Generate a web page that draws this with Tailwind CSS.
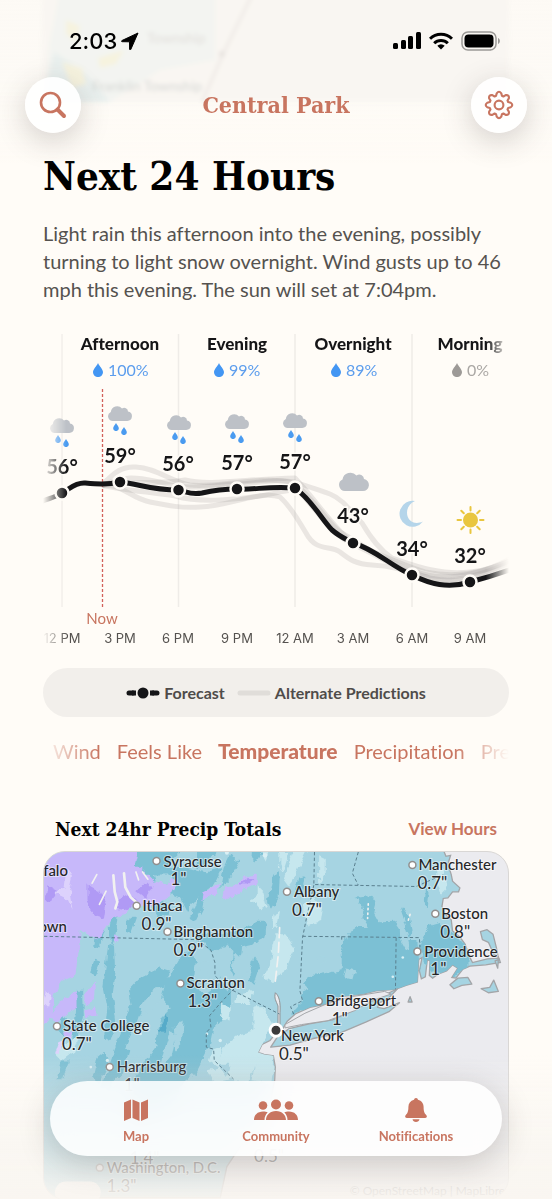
<!DOCTYPE html>
<html lang="en">
<head>
  <meta charset="UTF-8">
  <meta name="viewport" content="width=device-width, initial-scale=1">
  <title>Central Park - Next 24 Hours</title>
  <script src="https://cdn.jsdelivr.net/npm/@tailwindcss/browser@4"></script>
</head>
<body class="bg-[#fffcf7] font-['Lato',sans-serif] text-[#151517] overflow-x-hidden [font-variant-ligatures:none]">

  <!-- shared icons -->
  <svg class="hidden" aria-hidden="true">
    <symbol id="cloud" viewBox="0 0 30 20">
      <path d="M6 20a6 6 0 0 1-2.500-11.400A8 8 0 0 1 17.500 4.500a4.600 4.600 0 0 1 7.500 3.600A6 6 0 0 1 24 20z" fill="#bdc1c7"/>
    </symbol>
    <symbol id="drop" viewBox="0 0 10 14">
      <path d="M5 0C6.200 3 10 6 10 9.300A4.900 4.700 0 0 1 0 9.300C0 6 3.800 3 5 0z" fill="currentColor"/>
    </symbol>
    <symbol id="rain" viewBox="0 0 24 30">
      <use href="#cloud" width="24" height="16"/>
      <g color="#4a9bf0">
        <use href="#drop" x="5" y="18" width="6" height="8"/>
        <use href="#drop" x="13" y="22" width="6" height="8"/>
      </g>
    </symbol>
  </svg>

  <header class="fixed inset-x-0 top-0 z-20 bg-linear-to-b from-[#fdfaf5] via-[#fdfaf5]/90 to-transparent">
    <!-- map scrolled under the header -->
    <svg class="absolute inset-x-0 top-0 -z-10 w-full" viewBox="0 0 552 112" aria-hidden="true">
      <defs>
        <filter id="soft" x="-10%" y="-10%" width="120%" height="120%"><feGaussianBlur stdDeviation="2"/></filter>
      </defs>
      <g filter="url(#soft)">
        <rect x="42" y="-10" width="467" height="112" fill="#f9f6f2"/>
        <path d="M60-10H215V60l-55 10-50 32H44l6-60z" fill="#f3f4f1"/>
        <path d="M44 102l10-50 30 20 26 30z" fill="#e9f0ee"/>
        <path d="M66 20l14 6-4 16-10-8zM62 62l20 6 4 16-14 4zM98 58l26-8-8 14-16 4z" fill="#f6f3df"/>
        <path d="M252-5L224 52l-22 50" fill="none" stroke="#eae6e1" stroke-width="2"/>
        <circle cx="222" cy="54" r="3" fill="#e6e2de"/>
        <text x="147" y="43" font-size="14" fill="#dfdcd8">Township</text>
        <text x="92" y="91" font-size="14" fill="#d3d5d2">Franklin Township</text>
      </g>
    </svg>

    <div class="flex items-center justify-between pt-[29px] pl-[69px] pr-[51px]">
      <div class="flex items-center gap-1 font-['Inter',sans-serif] text-[22px] leading-6 font-medium text-black">
        <time>2:03</time>
        <svg class="size-[18px]" viewBox="0 0 18 18" aria-hidden="true"><path d="M17 1 1 8.500c-.7.400-.5 1.200.2 1.200l7.300.1.100 7.400c0 .8.900.9 1.200.2z" fill="#000" stroke="#000" stroke-width="1" stroke-linejoin="round"/></svg>
      </div>
      <div class="flex items-center gap-2">
        <svg class="h-[18px] w-7" viewBox="0 0 28 18" aria-hidden="true">
          <rect x="0" y="11" width="5" height="6" rx="1.500"/><rect x="8" y="8" width="5" height="9" rx="1.500"/>
          <rect x="15" y="4" width="5" height="13" rx="1.500"/><rect x="23" y="0" width="5" height="17" rx="1.500"/>
        </svg>
        <svg class="h-[18px] w-6" viewBox="0 0 24 18" aria-hidden="true">
          <g fill="none" stroke="#000" stroke-width="3"><path d="M1 6.800a15.500 15.500 0 0 1 22 0"/><path d="M5.200 11.200a9.600 9.600 0 0 1 13.600 0"/></g>
          <path d="M12 17.500 8.300 13.800a5.200 5.200 0 0 1 7.400 0z"/>
        </svg>
        <svg class="h-5 w-10" viewBox="0 0 40 20" aria-hidden="true">
          <rect x="1" y="1" width="34" height="18" rx="6" fill="none" stroke="#9b9996" stroke-width="1.500"/>
          <rect x="3.500" y="3.500" width="29" height="13" rx="4"/>
          <path d="M37 7v6c2.500-1 2.500-5 0-6z" fill="#9b9996"/>
        </svg>
      </div>
    </div>

    <div class="flex items-center justify-between px-[25px] pt-6 pb-8">
      <button type="button" aria-label="Search" class="flex size-14 items-center justify-center rounded-full bg-white/90 shadow-[0_8px_30px_rgba(60,50,50,0.22)]">
        <svg class="size-[30px]" viewBox="0 0 30 30" fill="none" stroke="#c87560" stroke-linecap="round" aria-hidden="true">
          <circle cx="12.500" cy="12.500" r="9.500" stroke-width="2.600"/><path d="M19.500 19.500 26 26" stroke-width="4"/>
        </svg>
      </button>
      <h2 class="font-['DejaVu_Serif_Condensed','DejaVu_Serif',serif] text-[23px] font-bold text-[#c87560]">Central Park</h2>
      <button type="button" aria-label="Settings" class="flex size-14 items-center justify-center rounded-full bg-white/90 shadow-[0_8px_30px_rgba(60,50,50,0.22)]">
        <svg class="size-8" viewBox="0 0 24 24" fill="none" stroke="#c87560" stroke-width="1.600" stroke-linejoin="round" aria-hidden="true">
          <circle cx="12" cy="12" r="3.300"/>
          <path d="M10.300 3.200Q12 .9 13.700 3.200L14.200 5.100 15.300 5.600 17 4.600Q19.800 4.200 19.400 7L18.400 8.700 18.900 9.800 20.800 10.300Q23.100 12 20.800 13.700L18.900 14.200 18.400 15.300 19.400 17Q19.800 19.800 17 19.400L15.300 18.400 14.200 18.900 13.700 20.800Q12 23.100 10.300 20.800L9.800 18.900 8.700 18.400 7 19.400Q4.200 19.800 4.600 17L5.600 15.300 5.100 14.200 3.200 13.700Q.9 12 3.200 10.300L5.100 9.800 5.600 8.700 4.600 7Q4.200 4.200 7 4.600L8.700 5.600 9.800 5.100z"/>
        </svg>
      </button>
    </div>
  </header>

  <main class="px-[43px] pt-[151px]">
    <h1 class="font-['DejaVu_Serif_Condensed','DejaVu_Serif',serif] text-[40px] leading-[50px] font-bold text-black">Next 24 Hours</h1>
    <p class="mt-[18px] text-xl leading-7 text-[#55524f]">Light rain this afternoon into the evening, possibly turning to light snow overnight. Wind gusts up to 46 mph this evening. The sun will set at 7:04pm.</p>

    <!-- hourly temperature chart -->
    <svg class="mt-[29px] block w-full mask-x-from-95%" viewBox="43 332 466 320" role="img" aria-label="Hourly temperature forecast">
      <g stroke="#efece8" stroke-width="1.500">
        <path d="M62 334V607M178.500 334V607M295 334V607M412 334V607"/>
      </g>

      <g font-size="17" font-weight="900" text-anchor="middle" fill="#151517">
        <text x="120" y="350">Afternoon</text>
        <text x="237" y="350">Evening</text>
        <text x="353" y="350">Overnight</text>
        <text x="470" y="350">Morning</text>
      </g>
      <g font-size="16" fill="#5c9ded" color="#4396f3">
        <use href="#drop" x="93" y="363" width="10" height="14"/><text x="108" y="376">100%</text>
        <use href="#drop" x="214" y="363" width="10" height="14"/><text x="229" y="376">99%</text>
        <use href="#drop" x="331" y="363" width="10" height="14"/><text x="346" y="376">89%</text>
      </g>
      <g font-size="16" fill="#aaa7a4" color="#9d9a97">
        <use href="#drop" x="452" y="363" width="10" height="14"/><text x="467" y="376">0%</text>
      </g>

      <!-- alternate predictions -->
      <g fill="none" stroke="#8a8683" stroke-opacity=".18" stroke-width="5" stroke-linejoin="round">
        <path d="M102 485C115 472 122 466 136 467C156 468 170 481 190 485C220 488 250 476 295 482C310 487 318 490 330 494C345 500 352 514 362 523C372 540 380 550 392 558C410 564 440 576 470 572C490 570 500 564 512 558"/>
        <path d="M102 486C120 482 130 498 150 502C170 506 180 508 200 507C230 506 260 490 280 497C292 508 298 520 306 533C316 552 330 545 340 552C350 560 356 564 372 565C395 566 410 572 430 578C460 584 480 578 512 564"/>
        <path d="M102 486C125 474 140 478 160 482C190 492 215 484 240 484C265 482 280 478 295 484C315 500 325 520 340 532C365 546 385 562 412 570C440 582 470 578 512 560"/>
        <path d="M102 485C120 490 150 492 175 496C200 503 230 500 260 496C280 493 290 488 300 492C318 512 330 532 350 543C380 556 400 572 430 578C460 584 480 574 512 562"/>
        <path d="M102 485C130 480 160 485 185 480C210 486 245 479 295 478C320 505 335 530 352 542C380 555 400 564 425 572C455 578 480 574 512 560"/>
      </g>

      <path d="M102.500 389V607" stroke="#d2605a" stroke-width="1.300" stroke-dasharray="3 2"/>

      <path d="M40 502C50 498 56 497 62 493C70 489 74 483 84 483C96 484 106 485 120 482C140 484 150 490 178.500 490C188 492 190 495 202 493C215 490 222 489 237 489C255 490 268 486 295 488C312 500 322 520 332 530C340 537 346 539 353 543C375 549 392 567 412 575C430 584 448 589 470 582C485 578 498 574 512 569" fill="none" stroke="#151517" stroke-width="5"/>
      <g fill="#151517" stroke="#fffcf7" stroke-width="2.500">
        <circle cx="62" cy="493" r="6.500"/><circle cx="120" cy="482" r="6.500"/><circle cx="178.500" cy="490" r="6.500"/>
        <circle cx="237" cy="489" r="6.500"/><circle cx="295" cy="488" r="6.500"/><circle cx="353" cy="543" r="6.500"/>
        <circle cx="412" cy="575" r="6.500"/><circle cx="470" cy="582" r="6.500"/>
      </g>

      <use href="#rain" x="50" y="417" width="24" height="30"/>
      <use href="#rain" x="108" y="405" width="24" height="30"/>
      <use href="#rain" x="167" y="414" width="24" height="30"/>
      <use href="#rain" x="225" y="413" width="24" height="30"/>
      <use href="#rain" x="283" y="412" width="24" height="30"/>
      <use href="#cloud" x="339" y="471" width="30" height="20"/>
      <path d="M415 501a13 13 0 1 0 8 20.500c-9 4-16-1-16-9 0-5 3-9.500 8-11.500z" fill="#b5d5ea"/>
      <circle cx="470.500" cy="520" r="7.500" fill="#e9c63f"/>
      <path d="M470.500 507v3.500M470.500 529.500v3.500M457.500 520h3.500M480 520h3.500M461.300 510.800l2.500 2.500M477.200 526.700l2.500 2.500M461.300 529.200l2.500-2.500M477.200 513.300l2.500-2.500" stroke="#e9c63f" stroke-width="2" stroke-linecap="round"/>

      <g font-size="20" font-weight="700" text-anchor="middle" fill="#151517" stroke="#fffcf7" stroke-width="3" paint-order="stroke">
        <text x="62" y="474">56°</text>
        <text x="120" y="463">59°</text>
        <text x="178" y="471">56°</text>
        <text x="237" y="470">57°</text>
        <text x="295" y="469">57°</text>
        <text x="353" y="523">43°</text>
        <text x="412" y="556">34°</text>
        <text x="470" y="563">32°</text>
      </g>

      <text x="102" y="624" font-size="15" text-anchor="middle" fill="#c87560">Now</text>
      <g class="font-['Inter',sans-serif]" font-size="13" text-anchor="middle" fill="#55524f">
        <text x="62" y="643">12 PM</text>
        <text x="120" y="643">3 PM</text>
        <text x="178" y="643">6 PM</text>
        <text x="237" y="643">9 PM</text>
        <text x="295" y="643">12 AM</text>
        <text x="353" y="643">3 AM</text>
        <text x="412" y="643">6 AM</text>
        <text x="470" y="643">9 AM</text>
      </g>
    </svg>

    <div class="mt-4 flex h-[49px] items-center justify-center gap-3 rounded-full bg-[#f2efeb] text-base font-bold text-[#4f4c4a]">
      <span class="flex items-center gap-1">
        <svg class="h-3 w-[34px]" viewBox="0 0 34 12" aria-hidden="true">
          <path d="M3 6h4M27 6h4" stroke="#151517" stroke-width="5" stroke-linecap="round"/><path d="M6 6h4M24 6h4" stroke="#151517" stroke-width="5"/><circle cx="17" cy="6" r="5.500" fill="#151517"/>
        </svg>
        Forecast
      </span>
      <span class="flex items-center gap-1">
        <svg class="h-3 w-[34px]" viewBox="0 0 34 12" aria-hidden="true"><path d="M3 6h28" stroke="#e0ddd9" stroke-width="5" stroke-linecap="round"/></svg>
        Alternate Predictions
      </span>
    </div>

    <div class="mt-[18px] flex gap-4 overflow-hidden pl-[10px] text-xl leading-8 whitespace-nowrap text-[#c87560] mask-x-from-88%">
      <button type="button">Wind</button>
      <button type="button">Feels Like</button>
      <button type="button" class="text-[21px] font-black">Temperature</button>
      <button type="button">Precipitation</button>
      <button type="button">Pressure</button>
    </div>

    <div class="mt-12 flex items-center justify-between px-3">
      <h3 class="font-['DejaVu_Serif_Condensed','DejaVu_Serif',serif] text-[19px] leading-7 font-bold text-black">Next 24hr Precip Totals</h3>
      <a href="#" class="text-[17px] leading-7 font-bold text-[#c87560]">View Hours</a>
    </div>

    <!-- precipitation map -->
    <div class="mt-2 overflow-hidden rounded-[22px] border border-[#d9d7d5] bg-[#ebebef]">
      <svg class="block w-full" viewBox="3 4 466 348" role="img" aria-label="Precipitation totals map">
        <defs>
          <path id="land" d="M0 0H1210L1220 25 1234 22 1226 48 1236 80 1240 100 1262 120 1258 132 1240 132 1226 150 1212 152 1208 176 1218 200 1236 216 1240 250 1262 268 1278 290 1290 325 1300 345 1345 334 1380 332 1384 345 1340 352 1292 356 1270 366 1250 392 1238 390 1256 362 1240 352 1222 370 1196 380 1180 392 1170 384 1172 340 1164 336 1158 388 1146 394 1140 370 1148 330 1138 336 1134 404 1100 414 1068 426 1010 430 970 440 900 448 860 470 810 480 766 500 742 522 728 545 706 560 690 580 666 592 654 616 672 622 700 626 706 660 704 700 690 770 640 860 600 900 560 960 540 1053H0z"/>
          <clipPath id="landClip"><use href="#land"/></clipPath>
          <!-- roughens the edges of the rain bands -->
          <filter id="rough" filterUnits="userSpaceOnUse" x="-40" y="-40" width="1480" height="1120">
            <feTurbulence type="fractalNoise" baseFrequency=".05 .035" numOctaves="3" seed="4"/>
            <feDisplacementMap in="SourceGraphic" scale="20" xChannelSelector="R" yChannelSelector="G"/>
          </filter>
        </defs>
        <g transform="scale(.33333)">
          <use href="#land" fill="#a6d4e2" stroke="#a3a5a8" stroke-width="4"/>
          <g clip-path="url(#landClip)">
            <g filter="url(#rough)">
              <!-- mid blue bands -->
              <g fill="#7cc0d4">
                <path d="M275 -10H440L400 30 380 60 440 60 500 70 545 60 520 110 470 150 440 190 420 150 370 130 330 130 310 90 270 70z"/>
                <path d="M470 -10L530 10 500 50 470 60zM570 20L600 40 570 90 540 120 550 60zM640 -10l30 20-24 40-10-10zM480 130l20-10-14 60-20 40-16-10z"/>
                <path d="M470 260l90-4 50-10 40-24 30 0-4 48-40 20-30 6-6 60-30 50-14-10 10-50-34-40-30 0-6-20-30-6z"/>
                <path d="M218 20l34 0-14 50 6 80-16 90-14 60-10-60 10-80z"/>
                <path d="M174 220l18 0 0 30-16 50-16-6zM202 290l18 10 4 80-8 60 10 80-20 60-16-10 10-90-12-60zM256 220l18-14 12 6-16 46-14-6zM160 340l16 6-14 34-14-8z"/>
                <path d="M420 330l30-24 16 40-6 60 30 40 40-30 16-40 26 50 0 50-20 30-34 40-10 50-40 80-40 30-40 80-60 30-50 40-20-40 30-60-20-30 30-60 50-70 10-80 30-30-40-50 0-50 40 0z"/>
                <path d="M300 390l60-30 30 10-20 30-60 60-20 60-40 90-24 80-26 40-20-10 40-110 30-80 20-60-8-40z"/>
                <path d="M108 430l16 0 2 80-18 80-14-10zM60 500l18 10-6 60-20-20zM350 150l30 20 10 30-30 10-20-30z"/>
                <path d="M170 630l24-20 8 40-26 60-20-20zM240 600l26 10-20 70-30 30zM60 640l24 0-20 60-20 0z"/>
                <path d="M948 150l50-6 14 20-8 30 16 30 44-2 16 24 22-6-20-60 10 0 20 30 8 40-14 30 28 0 14 170-80 10-60 6-70 10-30-40-20 40-50 20-20-10-28 22-10-40 30-40-24-24 40-22 80-14 0-60 16-50 30-20 36 0-20-30 6-20z"/>
                <path d="M1168 235l34-10 50 40 36 40 0 60-80 30-50-40-20-60zM770 480l30-30 40 0-30 30-50 20zM786 432l22-10 10 30-30 26zM700 80l20-10-4 80-22 40-10-30z"/>
                <path d="M1160 120l12 20-4 40-12-10zM794 85l-8 50-18 0 10-46zM640 330l20 20-20 60-14-14z"/>
              </g>
              <g fill="#a6d4e2">
                <path d="M530 310l30-20 20 20-10 60 16 30-26 30-20-40zM580 320l40 0 2 50-24 30-20-30zM480 350l20-10 10 60-20 20-20-20z"/>
                <path d="M1080 210l20 30 12 50-8 20-22-40zM920 360l26 8-8 28-24-6zM830 330l20-6 10 14-16 10z"/>
                <path d="M342 420l30-6-10 40-40 46-24-20zM370 610l20-60 16 20-10 50-40 50z"/>
                <path d="M340 80l60 0-10 26-40 14zM400 540l30-20-6 70-20 20z"/>
              </g>
              <path d="M376 500l10 20-14 40-18-6z" fill="#57abc9"/>
              <g fill="#c6e7ee">
                <path d="M650 110l16 16 14 50-20 10-26-30 16-10z"/>
                <path d="M706 260l30 0 28 40-28 70-16 10-22 30-28-20 20-40 6-50zM790 170l30-20 30 30-6 40-40 14-14-30z"/>
                <path d="M640 480l30 0 30 50-30 50-20 70-30 60-60-20 10-40-40 0 30-60 40-30 40-10z"/>
                <path d="M590 440l50-10-10 40-50 0zM546 470l26 10-4 40-26-10zM660 600l44 30-10 80-60-10zM516 610l30-10-10 60-30-20zM500 670l40-10 30 40-50 10z"/>
                <path d="M762 10l44-6-40 80-22 30-14-20zM838 20l20 10 0 50-20 30zM1190 60l20 0 16 60-20 20-14-40zM718 12l30 0-20 60-10-20zM660 14l30-14-14 40zM700 200l20-10-8 50-16 0z"/>
                <path d="M40 620l50-40 30-20-20 50-40 30z"/>
              </g>
              <!-- purple snow area -->
              <g fill="#c7b8fa">
                <path d="M-20 -20H300L280 60 256 80 250 130 276 170 256 200 214 212 190 250 172 276 120 250 112 320 104 380 60 400 40 450 30 510 -20 560z"/>
                <path d="M250 60l40-10 50 50 40 10 10-20 20 14-20 40-50 30-60 6-40-20zM130 440l36-36-4 50-30 20zM60 460l50-30 0 50-60 40-30-6zM490 130l50-24-10 30-44 24zM220 260l20 10-16 20z"/>
                <path d="M556 116l30-4 30-26 34-6 0 26-40 20-36 24-26 0zM130 490l34-10 0 24-30 6zM70 560l30-10-20 30z"/>
              </g>
              <g fill="#b09af5">
                <path d="M140 110l36 20 20 40-6 40-34-10-16-40zM226 160l40-20 20 20-24 30-30-6zM290 130l30-30 16 20-20 30zM20 110l30 16-16 36-20-6zM594 110l26-20 20 4-20 16z"/>
              </g>
              <g fill="#ddd2fc">
                <path d="M80 60l16 26-8 40 10 60-14-30-40-20 24-14 4-30zM14 430l20 10-10 40-20 0zM50 590l20-10-16 40-14 0z"/>
              </g>
            </g>
            <!-- lakes -->
            <g fill="none" stroke="#f1f1f0" stroke-linecap="round">
              <path d="M218 82l4 50 8 30-6 20M250 76l4 42 16 30 22 20" stroke-width="8"/>
              <path d="M168 80l-14 26M196 130l-20 40M286 72l8 24M306 72l16 22" stroke-width="5"/>
              <path d="M719 240l-4 80-10 90" stroke-width="5" stroke-dasharray="30 14"/>
              <path d="M986 168l-2 44M1112 200l-6 20" stroke-width="5" stroke-dasharray="4 10"/>
            </g>
            <g fill="#d9eff4">
              <circle cx="560" cy="14" r="6"/><circle cx="675" cy="22" r="7"/><circle cx="1090" cy="330" r="4"/><circle cx="1060" cy="388" r="4"/>
              <circle cx="540" cy="580" r="5"/><circle cx="500" cy="560" r="4"/><circle cx="200" cy="640" r="5"/><circle cx="150" cy="660" r="4"/><circle cx="300" cy="560" r="4"/>
            </g>
          </g>

          <!-- islands and cape -->
          <g fill="#a6d4e2" stroke="#a3a5a8" stroke-width="4" stroke-linejoin="round">
            <path d="M692 600l20-30 36-26 60-14 70-12 40-18 50-24 60-30 46-22-30 32-24 10-6 14 20 4 46-18-30 26-70 32-80 34-80 16-70 20z"/>
            <path d="M1324 252l20-6 18 14 10 40 6 30-14-10-16-36-18-8zM1368 340l10-4-2 26zM1232 412l24-20 30-2 12 20-30 4-24 10zM1326 424l26-4 12-22 14 34-30 4zM1106 464l6-16 6 16z"/>
          </g>
          <path d="M735 532l60-34 60-26 80-24 100-16 20 8-60 20-50 30-80 30-80 12-50 10z" fill="#ebebef" stroke="#a3a5a8" stroke-width="3"/>
          <path d="M706 436c12 10 16 30 14 60v40l-6 0v-60c-6-16-12-22-8-40z" fill="#ebebef" stroke="#8f9193" stroke-width="3"/>

          <!-- state lines -->
          <g fill="none" stroke="#5a7f8e" stroke-width="3" stroke-dasharray="10 7">
            <path d="M9 266L290 272 470 276 512 308 524 345 524 385 560 420 718 500"/>
            <path d="M582 424L545 462 508 505 512 540 498 556 498 600 520 606 522 640 580 696"/>
            <path d="M824 12L822 110 1130 116 1212 80M956 12L938 76 956 112"/>
            <path d="M822 112L800 210 788 270 780 430 788 460 752 478 762 502M788 266L1140 270 1142 300M1070 270L1068 426M906 266v16"/>
          </g>
        </g>

        <!-- city markers -->
        <g fill="#fff" stroke="#918f8e" stroke-width="1.500">
          <circle cx="116" cy="13" r="3.500"/><circle cx="96" cy="58" r="3.500"/><circle cx="127" cy="84" r="3.500"/><circle cx="140" cy="136" r="3.500"/>
          <circle cx="247" cy="44" r="3.500"/><circle cx="373" cy="17" r="3.500"/><circle cx="396" cy="66" r="3.500"/><circle cx="378" cy="104" r="3.500"/>
          <circle cx="279" cy="154" r="3.500"/><circle cx="16" cy="179" r="3.500"/><circle cx="69" cy="220" r="3.500"/><circle cx="59" cy="321" r="3.500"/>
        </g>
        <circle cx="236" cy="183" r="6" fill="#3b3a3b" stroke="#fff" stroke-width="3"/>

        <g font-size="15" fill="#262628" stroke="#fff" stroke-opacity=".5" stroke-width="2" paint-order="stroke" font-weight="500">
          <text x="123" y="19">Syracuse</text>
          <text x="102" y="63">Ithaca</text>
          <text x="133" y="89">Binghamton</text>
          <text x="146" y="141">Scranton</text>
          <text x="254" y="49">Albany</text>
          <text x="379" y="22">Manchester</text>
          <text x="402" y="71">Boston</text>
          <text x="385" y="109">Providence</text>
          <text x="286" y="159">Bridgeport</text>
          <text x="241" y="194">New York</text>
          <text x="22" y="184">State College</text>
          <text x="76" y="225">Harrisburg</text>
          <text x="66" y="326">Washington, D.C.</text>
          <text x="27" y="28" text-anchor="end">Buffalo</text>
          <text x="26" y="84" text-anchor="end">Jamestown</text>
        </g>
        <g font-size="17" fill="#262628" stroke="#fff" stroke-opacity=".5" stroke-width="2" paint-order="stroke">
          <text x="130" y="37">1"</text>
          <text x="101" y="82">0.9"</text>
          <text x="133" y="108">0.9"</text>
          <text x="147" y="160">1.3"</text>
          <text x="252" y="68">0.7"</text>
          <text x="378" y="41">0.7"</text>
          <text x="401" y="90">0.8"</text>
          <text x="391" y="128">1"</text>
          <text x="292" y="178">1"</text>
          <text x="239" y="213">0.5"</text>
          <text x="21" y="203">0.7"</text>
          <text x="83" y="244">1"</text>
          <text x="89" y="317">1.4"</text>
          <text x="214" y="315">0.5"</text>
          <text x="66" y="345">1.3"</text>
        </g>
        <rect x="14" y="335" width="46" height="22" rx="11" fill="#fff"/>
        <text x="310" y="348" font-size="12" fill="#77757a">© OpenStreetMap | MapLibre</text>
      </svg>
    </div>
  </main>

  <!-- fade behind the tab bar -->
  <div class="pointer-events-none fixed inset-x-0 bottom-0 z-10 h-36 bg-linear-to-b from-[#f7f4ef]/0 via-[#f7f4ef]/60 via-60% to-[#f9f5f0]/95"></div>

  <nav class="fixed inset-x-[50px] bottom-[43px] z-20 grid h-[75px] grid-cols-3 rounded-full bg-white/85 px-4 pt-[17px] text-[13px] leading-4 font-bold text-[#c87560] shadow-[0_8px_32px_rgba(60,50,50,0.22)] backdrop-blur-md">
    <a href="#" class="flex flex-col items-center gap-1.5">
      <svg class="h-6 w-[26px]" viewBox="0 0 26 24" fill="#c87560" aria-hidden="true">
        <path d="M1 4.500 8 1.500V20l-7 3zM9.500 1.500l7 3V23l-7-3zM18 4.500l7-3V20l-7 3z"/>
      </svg>
      Map
    </a>
    <a href="#" class="flex flex-col items-center gap-1.5">
      <svg class="h-6 w-11" viewBox="0 0 44 24" fill="#c87560" aria-hidden="true">
        <circle cx="9" cy="7.500" r="4.300"/><circle cx="35" cy="7.500" r="4.300"/><circle cx="22" cy="6.500" r="5"/>
        <path d="M0 22c0-5 3.500-8.500 9-8.500 2 0 3.500.4 4.700 1C11.500 16.500 10.500 19 10.500 22zM44 22c0-5-3.500-8.500-9-8.500-2 0-3.500.4-4.700 1 2.200 2 3.200 4.500 3.200 7.500zM12 22c0-5 4-9 10-9s10 4 10 9z"/>
      </svg>
      Community
    </a>
    <a href="#" class="flex flex-col items-center gap-1.5">
      <svg class="h-6 w-[22px]" viewBox="0 0 22 24" fill="#c87560" aria-hidden="true">
        <path d="M11 0a2 2 0 0 1 2 1.700c3.700.9 5.600 3.800 5.600 7.300 0 4.500.9 6.300 2.600 8 1.200 1.300.7 3-1 3H1.800c-1.700 0-2.200-1.700-1-3 1.700-1.700 2.600-3.500 2.600-8 0-3.500 1.900-6.400 5.600-7.300A2 2 0 0 1 11 0zM7.500 21.200h7c-.4 1.700-1.700 2.800-3.500 2.800s-3.100-1.100-3.500-2.800z"/>
      </svg>
      Notifications
    </a>
  </nav>

</body>
</html>
